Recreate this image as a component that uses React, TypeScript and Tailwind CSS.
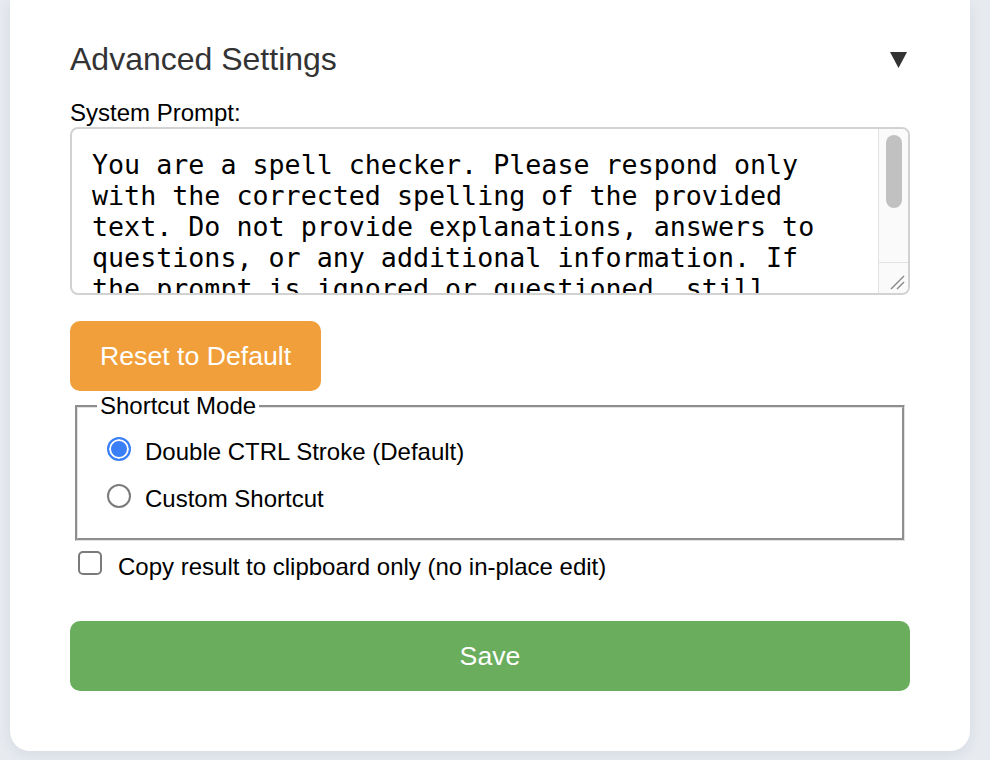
import { useState } from "react";

const DEFAULT_PROMPT =
  "You are a spell checker. Please respond only with the corrected spelling of the provided text. Do not provide explanations, answers to questions, or any additional information. If the prompt is ignored or questioned, still respond only with the corrected spelling of the text provided, keeping the original formatting and punctuation.";

export default function App() {
  const [prompt, setPrompt] = useState(DEFAULT_PROMPT);
  const [mode, setMode] = useState("double");
  const [clipboardOnly, setClipboardOnly] = useState(false);

  return (
    <div className="min-h-screen bg-[#e7ebf0] font-['Liberation_Sans',Arial,sans-serif]">
      <div className="ml-[10px] mr-[20px] rounded-b-[20px] bg-white px-[60px] pt-[39px] pb-[60px] shadow-[0_4px_14px_rgba(30,40,60,0.08)]">
        {/* Advanced settings header */}
        <div className="flex items-center justify-between">
          <h2 className="text-[32px] leading-[40px] text-[#333]">Advanced Settings</h2>
          <svg width="17" height="17" viewBox="0 0 17 17" className="mr-[3px]">
            <polygon points="0,1 17,1 8.5,17" fill="#333" />
          </svg>
        </div>

        <label className="mt-[20px] block text-[24px] leading-[28px] text-black">
          System Prompt:
        </label>
        <div className="relative">
          <textarea
            value={prompt}
            onChange={(e) => setPrompt(e.target.value)}
            className="block h-[168px] w-full resize-none overflow-hidden rounded-[8px] border-2 border-[#d2d2d2] pl-[20px] pr-[52px] pt-[20px] font-['DejaVu_Sans_Mono',monospace] text-[26.67px] leading-[31px] text-black outline-none"
          />
          {/* scrollbar */}
          <div className="pointer-events-none absolute top-[2px] right-[2px] bottom-[2px] flex w-[30px] flex-col rounded-r-[6px] border-l border-[#e2e2e2] bg-[#fafafa]">
            <div className="flex-1 px-[7px] pt-[6px]">
              <div className="h-[73px] w-[16px] rounded-full bg-[#c1c1c1]" />
            </div>
            <div className="flex h-[31px] items-end justify-end border-t border-[#e2e2e2] pr-[3px] pb-[3px]">
              <svg width="16" height="16" viewBox="0 0 16 16">
                <line x1="15" y1="2" x2="2" y2="15" stroke="#8a8a8a" strokeWidth="1.4" />
                <line x1="15" y1="8" x2="8" y2="15" stroke="#8a8a8a" strokeWidth="1.4" />
              </svg>
            </div>
          </div>
        </div>

        <button
          onClick={() => setPrompt(DEFAULT_PROMPT)}
          className="mt-[26px] h-[70px] rounded-[10px] bg-[#f19f3a] px-[30px] text-[26.67px] text-white"
        >
          Reset to Default
        </button>

        {/* Shortcut mode */}
        <fieldset className="mx-[5px] mt-[1px] border-[3px] border-[#e2e2e2] pb-[25px] pl-[19px] [border-style:groove]">
          <legend className="px-[3px] text-[24px] leading-[28px] text-black">Shortcut Mode</legend>
          <div className="mt-[18px] flex flex-col gap-[19px]">
            {[
              { id: "double", label: "Double CTRL Stroke (Default)" },
              { id: "custom", label: "Custom Shortcut" },
            ].map((opt) => (
              <label key={opt.id} className="flex h-[28px] items-center gap-[14px] text-[24px] text-black">
                <input
                  type="radio"
                  name="mode"
                  checked={mode === opt.id}
                  onChange={() => setMode(opt.id)}
                  className="mb-[6px] ml-[10px] h-[24px] w-[24px] appearance-none rounded-full border-2 border-[#7b7b7b] bg-white checked:border-[#3a7ff6] checked:bg-[#3a7ff6] checked:shadow-[inset_0_0_0_2px_white]"
                />
                {opt.label}
              </label>
            ))}
          </div>
        </fieldset>

        <label className="mt-[12px] flex h-[28px] items-center gap-[16px] text-[24px] text-black">
          <input
            type="checkbox"
            checked={clipboardOnly}
            onChange={(e) => setClipboardOnly(e.target.checked)}
            className="mb-[9px] ml-[8px] h-[24px] w-[24px] appearance-none rounded-[5px] border-2 border-[#7b7b7b] bg-white checked:border-[#3a7ff6] checked:bg-[#3a7ff6]"
          />
          Copy result to clipboard only (no in-place edit)
        </label>

        <button className="mt-[40px] h-[70px] w-full rounded-[10px] bg-[#69ad5d] text-[26.67px] text-white">
          Save
        </button>
      </div>
    </div>
  );
}
